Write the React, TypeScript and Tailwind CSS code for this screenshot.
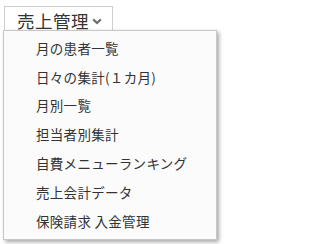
import React from "react";

const items = [
  "月の患者一覧",
  "日々の集計(１カ月)",
  "月別一覧",
  "担当者別集計",
  "自費メニューランキング",
  "売上会計データ",
  "保険請求 入金管理",
];

export default function App() {
  return (
    <div
      className="w-[222px] h-[244px] bg-white pl-[4px] pt-[6px]"
      style={{ fontFamily: '"Noto Sans CJK JP", "Noto Sans", sans-serif' }}
    >
      <div className="flex h-[24px] w-[109px] items-center border border-b-0 border-[#cfcfcf] bg-white pl-[12px] pt-[4px] text-[17.5px] leading-none tracking-[0.5px] text-[#333]">
        <span>売上管理</span>
        <svg width="10" height="7" viewBox="0 0 10 7" className="ml-[3px] mt-[1px]">
          <path d="M1.2 1.4 L5 5 L8.8 1.4" fill="none" stroke="#707070" strokeWidth="2.2" />
        </svg>
      </div>
      <div className="-ml-[1px] flex h-[210px] w-[214px] flex-col border border-[#c8c8c8] bg-[#fbfbfb] py-[3px] shadow-[2px_2px_4px_rgba(0,0,0,0.35)]">
        {items.map((t) => (
          <div
            key={t}
            className="flex h-[29px] items-center pl-[32px] text-[13.5px] leading-none tracking-[0.3px] text-[#333]"
          >
            {t}
          </div>
        ))}
      </div>
    </div>
  );
}
